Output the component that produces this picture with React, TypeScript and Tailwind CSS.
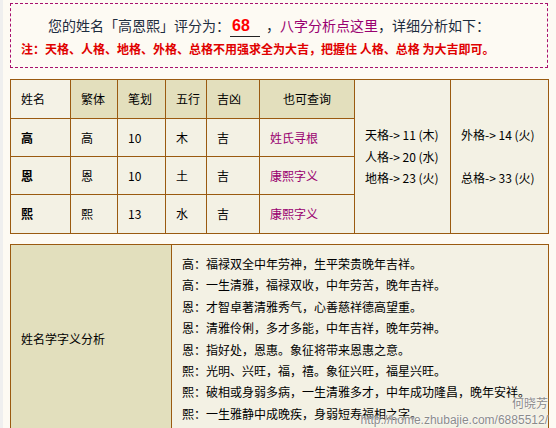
import React from "react";

const cjk = "font-['Noto_Sans_CJK_SC','Noto_Sans',sans-serif]";

const heads = ["繁体", "笔划", "五行", "吉凶"];

const rows = [
  { name: "高", trad: "高", strokes: "10", wx: "木", luck: "吉", link: "姓氏寻根" },
  { name: "恩", trad: "恩", strokes: "10", wx: "土", luck: "吉", link: "康熙字义" },
  { name: "熙", trad: "熙", strokes: "13", wx: "水", luck: "吉", link: "康熙字义" },
];

const meanings = [
  "高：福禄双全中年劳神，生平荣贵晚年吉祥。",
  "高：一生清雅，福禄双收，中年劳苦，晚年吉祥。",
  "恩：才智卓著清雅秀气，心善慈祥德高望重。",
  "恩：清雅伶俐，多才多能，中年吉祥，晚年劳神。",
  "恩：指好处，恩惠。象征将带来恩惠之意。",
  "熙：光明、兴旺，福，禧。象征兴旺，福星兴旺。",
  "熙：破相或身弱多病，一生清雅多才，中年成功隆昌，晚年安祥。",
  "熙：一生雅静中成晚疾，身弱短寿福相之字。",
];

const cell =
  "border border-[#9a5a10] px-[10px] text-[12px] whitespace-nowrap overflow-visible align-middle";

export default function App() {
  return (
    <div
      className={`relative w-[556px] h-[428px] overflow-hidden bg-[#fdfaf3] border-l-[3px] border-[#efefef] pl-[7px] pt-[3px] text-black ${cjk}`}
    >
      {/* score box */}
      <div className="w-[538px] border border-dashed border-[#a8106e] pt-[10px] pb-[8px] pl-[37px] pr-[10px]">
        <p className="text-[14px] leading-[22px] text-[#1d2c3e] whitespace-nowrap">
          您的姓名「高恩熙」评分为：
          <span className="inline-block w-[30px] border-b border-[#222] pl-[2px] text-left font-['Liberation_Sans',sans-serif] font-bold text-[16px] leading-[20px] text-[#ff0000]">
            68
          </span>
          <span className="inline-block w-[6px]" />
          ，<span className="text-[#990070]">八字分析点这里</span>，详细分析如下：
        </p>
        <p className="-ml-[27px] mt-[2px] text-[12px] leading-[20px] font-bold text-[#e00000] whitespace-nowrap">
          注：天格、人格、地格、外格、总格不用强求全为大吉，把握住 人格、总格 为大吉即可。
        </p>
      </div>

      {/* name table */}
      <table className="mt-[11px] w-[538px] table-fixed border-collapse">
        <colgroup>
          <col className="w-[60px]" />
          <col className="w-[47px]" />
          <col className="w-[48px]" />
          <col className="w-[41px]" />
          <col className="w-[53px]" />
          <col className="w-[95px]" />
          <col className="w-[96px]" />
          <col className="w-[98px]" />
        </colgroup>
        <tbody>
          <tr className="h-[39px]">
            <td className={`${cell} bg-[#f4f2e6]`}>姓名</td>
            {heads.map((h) => (
              <td key={h} className={`${cell} bg-[#e3dfbd]`}>
                {h}
              </td>
            ))}
            <td className={`${cell} bg-[#e3dfbd] text-center`}>也可查询</td>
            <td rowSpan={4} className={`${cell} bg-[#f3f1e4] leading-[21.5px]`}>
              <div>天格-&gt; 11 (木)</div>
              <div>人格-&gt; 20 (水)</div>
              <div>地格-&gt; 23 (火)</div>
            </td>
            <td rowSpan={4} className={`${cell} bg-[#f3f1e4] leading-[21.5px]`}>
              <div>外格-&gt; 14 (火)</div>
              <div>&nbsp;</div>
              <div>总格-&gt; 33 (火)</div>
            </td>
          </tr>
          {rows.map((r, i) => (
            <tr key={i} className={i === 2 ? "h-[39px]" : "h-[38px]"}>
              <td className={`${cell} bg-[#f3f1e4] font-bold`}>{r.name}</td>
              <td className={`${cell} bg-[#f3f1e4]`}>{r.trad}</td>
              <td className={`${cell} bg-[#f3f1e4]`}>{r.strokes}</td>
              <td className={`${cell} bg-[#f3f1e4]`}>{r.wx}</td>
              <td className={`${cell} bg-[#f3f1e4]`}>{r.luck}</td>
              <td className={`${cell} bg-[#f3f1e4] text-[#990070]`}>{r.link}</td>
            </tr>
          ))}
        </tbody>
      </table>

      {/* meaning table */}
      <table className="mt-[10px] w-[538px] table-fixed border-collapse">
        <colgroup>
          <col className="w-[161px]" />
          <col className="w-[377px]" />
        </colgroup>
        <tbody>
          <tr>
            <td className={`${cell} bg-[#e2dfbd]`}>姓名学字义分析</td>
            <td className={`${cell} bg-[#f3f1e4] pt-[8px] pb-[8px] leading-[21.4px]`}>
              {meanings.map((m, i) => (
                <div key={i}>{m}</div>
              ))}
            </td>
          </tr>
        </tbody>
      </table>

      {/* watermark */}
      <div className="absolute right-[8px] top-[396px] text-right text-[#8a8a8a] [text-shadow:0_0_2px_#fff,0_0_1px_#fff] leading-[14px]">
        <div className="text-[12px]">何晓芳</div>
        <div className="mt-[3px] font-['Liberation_Sans',sans-serif] text-[12px]">
          http://home.zhubajie.com/6885512/
        </div>
      </div>
    </div>
  );
}
